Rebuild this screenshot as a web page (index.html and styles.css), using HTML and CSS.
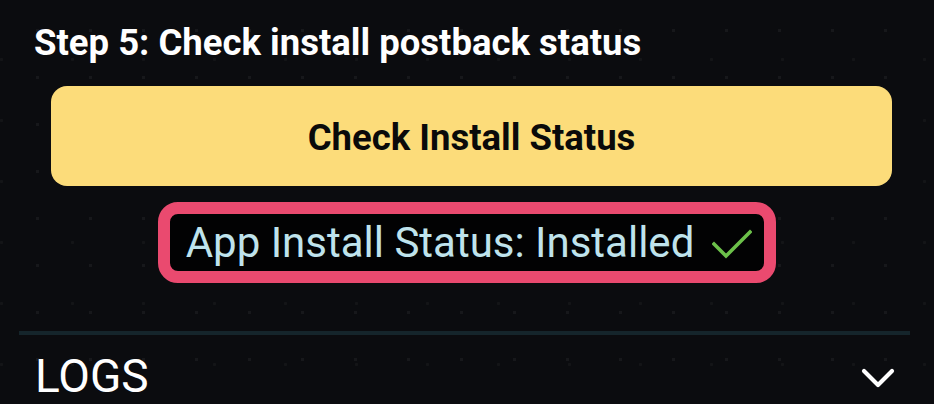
FILE: index.html
```html
<!DOCTYPE html>
<html lang="en">
<head>
<meta charset="utf-8">
<title>Step 5</title>
<link rel="stylesheet" href="styles.css">
</head>
<body>
<main class="page">
  <section class="step">
    <h2 class="step-title">Step 5: Check install postback status</h2>
    <button class="check-btn" type="button">Check Install Status</button>
    <div class="status-wrap">
      <div class="status-box">
        <span class="status-text">App Install Status: Installed</span>
        <svg class="status-check" viewBox="0 0 40 30" width="40" height="30" aria-hidden="true">
          <path d="M2 15 L14 27 L38 3" fill="none" stroke="#6cc04a" stroke-width="3.6" stroke-linecap="square"/>
        </svg>
      </div>
    </div>
  </section>
  <hr class="divider">
  <div class="logs-row">
    <span class="logs-label">LOGS</span>
    <svg class="chevron" viewBox="0 0 34 22" width="34" height="22" aria-hidden="true">
      <path d="M3 4 L17 18 L31 4" fill="none" stroke="#ffffff" stroke-width="4.2" stroke-linecap="round" stroke-linejoin="round"/>
    </svg>
  </div>
</main>
</body>
</html>
```

FILE: styles.css
```css
html, body {
  margin: 0;
  padding: 0;
}

body {
  width: 934px;
  height: 404px;
  overflow: hidden;
  background-color: #0b0c0f;
  background-image:
    radial-gradient(circle, rgba(255,255,255,0.05) 1.4px, transparent 2px),
    radial-gradient(circle, rgba(255,255,255,0.035) 1.2px, transparent 2px);
  background-size: 53px 47px, 71px 61px;
  background-position: 11px 7px, 37px 29px;
  font-family: Roboto, "Liberation Sans", sans-serif;
  color: #ffffff;
}

.page {
  padding: 0 24px 0 19px;
}

.step {
  display: flex;
  flex-direction: column;
}

.step-title {
  margin: 0;
  padding: 23px 0 0 15px;
  font-size: 36.5px;
  line-height: 40px;
  font-weight: 700;
  color: #ffffff;
  white-space: nowrap;
}

.check-btn {
  margin: 23px 18px 0 32px;
  height: 100px;
  border: none;
  border-radius: 16px;
  background: #fcdc7a;
  color: #0a0a0a;
  font-family: Roboto, "Liberation Sans", sans-serif;
  font-size: 36.5px;
  font-weight: 700;
  padding: 3px 0 0;
}

.status-wrap {
  display: flex;
  justify-content: center;
  margin-top: 16px;
  padding-left: 5px;
}

.status-box {
  display: flex;
  align-items: center;
  gap: 18px;
  height: 57px;
  padding: 0 12px 0 16px;
  border: 12px solid #ea4a6f;
  border-radius: 20px;
  background: #020203;
}

.status-text {
  font-size: 42px;
  line-height: 57px;
  color: #bfe3ec;
  font-weight: 400;
  white-space: nowrap;
}

.status-check {
  display: block;
  margin-top: 2px;
}

.divider {
  margin: 48px 0 0;
  border: none;
  height: 4px;
  background: #15252b;
}

.logs-row {
  display: flex;
  align-items: center;
  justify-content: space-between;
  padding: 16px 15px 0 16px;
}

.logs-label {
  font-size: 46px;
  line-height: 50px;
  color: #ffffff;
}

.chevron {
  display: block;
  margin-top: 4px;
}
```
